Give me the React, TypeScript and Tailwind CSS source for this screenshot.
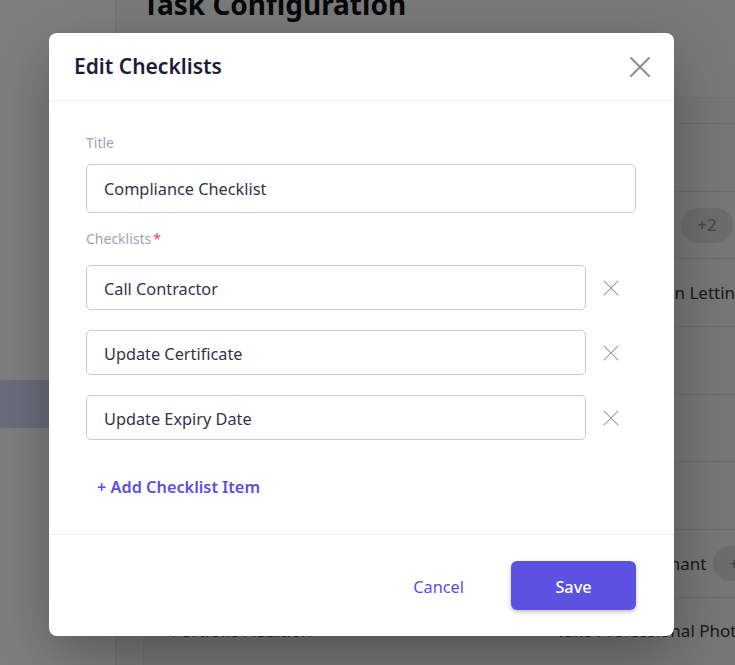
const FONT = { fontFamily: '"Noto Sans", "Open Sans", sans-serif' }

type Row = { name: string; right: string; textW: number; chip: string }

// rows of the table behind the overlay; only the parts outside the modal show
const ROWS: Row[] = [
  { name: '', right: '', textW: 0, chip: '' },
  { name: '', right: '', textW: 115, chip: '+2' },
  { name: '', right: 'Book Inspection Letting', textW: 0, chip: '' },
  { name: '', right: '', textW: 0, chip: '' },
  { name: '', right: '', textW: 0, chip: '' },
  { name: '', right: '', textW: 0, chip: '' },
  { name: '', right: 'Induct New Tenant', textW: 147, chip: '+1' },
  { name: 'Portfolio Audition', right: 'Take Professional Photos', textW: 0, chip: '' },
]

const ITEMS = ['Call Contractor', 'Update Certificate', 'Update Expiry Date']

function Cross({ size, stroke, className }: { size: number; stroke: number; className?: string }) {
  return (
    <svg width={size} height={size} viewBox={`0 0 ${size} ${size}`} className={className} fill="none">
      <path d={`M1 1L${size - 1} ${size - 1}M${size - 1} 1L1 ${size - 1}`} stroke="currentColor" strokeWidth={stroke} strokeLinecap="round" />
    </svg>
  )
}

function Background() {
  return (
    <div className="flex h-[665px] overflow-hidden bg-white">
      <aside className="w-[116px] shrink-0 border-r border-gray-200 bg-white pt-[380px]">
        <div className="h-[48px] bg-[#d9dbfb]" />
      </aside>
      <main className="flex-1 bg-[#f5f5f5] pl-[27px]">
        <h1 className="-mt-[16px] text-[28px] font-bold leading-[40px] text-[#111]">Task Configuration</h1>
        <div className="mt-[73px] border-l border-t border-gray-200 bg-[#efefef]">
          <div className="h-[26px] border-b border-[#d8d8d8]" />
          {ROWS.map((r, i) => (
            <div key={i} className="flex h-[67.7px] items-center whitespace-nowrap border-b border-[#d8d8d8] pl-[27px] text-[17px] text-[#333]">
              <span className="w-[357px]">{r.name}</span>
              <span className="w-[28px] text-[10px] text-[#333]">{r.name ? '▾' : ''}</span>
              <span className="shrink-0" style={r.textW ? { width: r.textW } : undefined}>{r.right}</span>
              {r.chip && (
                <span className="ml-[10px] flex h-[35px] w-[52px] shrink-0 items-center justify-center rounded-full bg-[#dadada] text-[#8a8a8a]">
                  {r.chip}
                </span>
              )}
            </div>
          ))}
        </div>
      </main>
    </div>
  )
}

export default function App() {
  return (
    <div className="relative h-[665px] w-[735px] overflow-hidden" style={FONT}>
      <Background />
      <div className="absolute inset-0 bg-black/50">
        <div className="absolute left-[49px] top-[33px] flex h-[603px] w-[625px] flex-col rounded-[8px] bg-white shadow-[0_20px_60px_rgba(0,0,0,0.3)]">
          <div className="flex h-[68px] items-center justify-between border-b border-[#ebebf0] pl-[25px] pr-[24px]">
            <h2 className="text-[21px] font-semibold text-[#1b1d3a]">Edit Checklists</h2>
            <Cross size={20} stroke={2} className="text-[#8f8f8f]" />
          </div>

          <div className="flex-1 border-b border-[#ebebf0] px-[37px] pt-[32px]">
            <label className="block text-[14px] leading-[20px] text-[#a3a3b3]">Title</label>
            <div className="mt-[11px] flex h-[49px] w-[550px] items-center rounded-[5px] border border-[#c9c9d6] px-[17px] pt-[2px] text-[16.3px] text-[#33334a]">
              Compliance Checklist
            </div>
            <label className="mt-[16px] block text-[14px] leading-[20px] text-[#a3a3b3]">
              Checklists<span className="ml-[2px] text-[#e8457a]">*</span>
            </label>
            <div className="mt-[16px] flex flex-col gap-[20px]">
              {ITEMS.map(item => (
                <div key={item} className="flex items-center">
                  <div className="flex h-[45px] w-[500px] items-center rounded-[5px] border border-[#c9c9d6] px-[17px] pt-[3px] text-[16.3px] text-[#33334a]">
                    {item}
                  </div>
                  <Cross size={16} stroke={1.05} className="ml-[17px] text-[#8a8a8a]" />
                </div>
              ))}
            </div>
            <button className="mt-[35px] pl-[11px] text-[16.3px] font-semibold text-[#5a50e0]">+ Add Checklist Item</button>
          </div>

          <div className="flex h-[101px] items-center justify-end gap-[47px] pr-[38px]">
            <button className="pt-[3px] text-[16.3px] text-[#5a50e0]">Cancel</button>
            <button className="h-[49px] w-[125px] rounded-[6px] bg-[#5b52e1] pt-[3px] text-[16.3px] font-medium text-white shadow-[0_2px_4px_rgba(0,0,0,0.25)]">
              Save
            </button>
          </div>
        </div>
      </div>
    </div>
  )
}
